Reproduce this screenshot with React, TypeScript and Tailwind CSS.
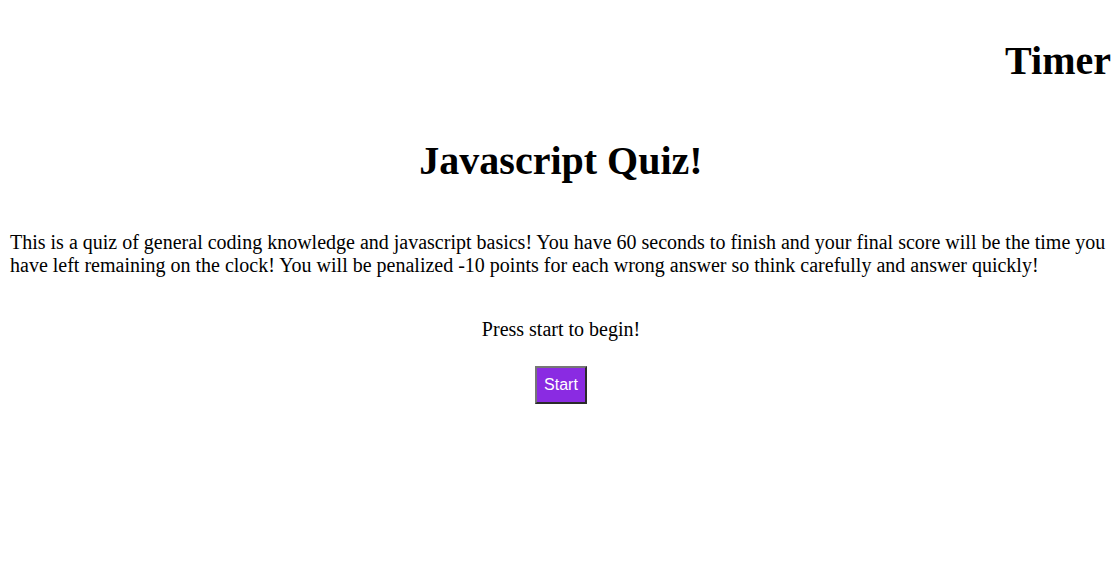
import React from "react";

function StartButton() {
  return (
    <button
      type="button"
      className="bg-[#8a2be2] text-white text-[16px] leading-[18px] px-[7px] py-[8px] border-2 border-t-[#767676] border-l-[#767676] border-b-[#2b2b2b] border-r-[#2b2b2b] font-['Liberation_Sans',Arial,sans-serif]"
    >
      Start
    </button>
  );
}

export default function App() {
  return (
    <div className="min-h-[578px] bg-white text-black pl-[10px] pt-[38px] font-['Liberation_Serif','Times_New_Roman',serif]">
      <header className="flex justify-end pr-[1px]">
        <h2 className="text-[40px] leading-[46px] font-bold">Timer</h2>
      </header>

      <main className="flex flex-col items-center">
        <h1 className="mt-[54px] text-[40px] leading-[46px] font-bold text-center">
          Javascript Quiz!
        </h1>
        <p className="mt-[47px] self-stretch text-[20px] leading-[23px]">
          This is a quiz of general coding knowledge and javascript basics! You
          have 60 seconds to finish and your final score will be the time you
          have left remaining on the clock! You will be penalized -10 points for
          each wrong answer so think carefully and answer quickly!
        </p>
        <p className="mt-[41px] text-[20px] leading-[23px] text-center">
          Press start to begin!
        </p>
        <div className="mt-[25px]">
          <StartButton />
        </div>
      </main>
    </div>
  );
}
